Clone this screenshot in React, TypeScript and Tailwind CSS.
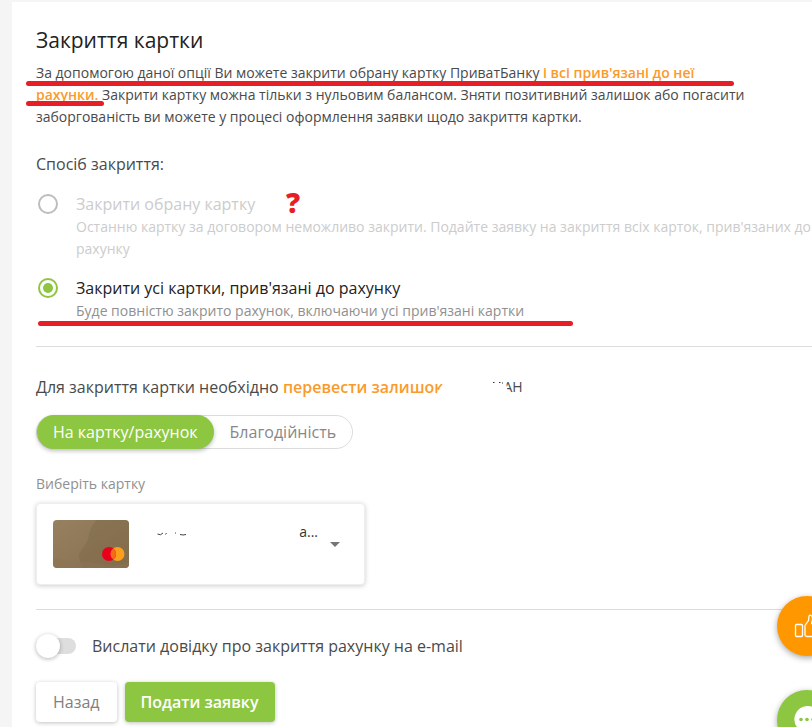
import { useState } from 'react'

const METHODS = [
  {
    id: 'single', title: 'Закрити обрану картку', disabled: true,
    hint: "Останню картку за договором неможливо закрити. Подайте заявку на закриття всіх карток, прив'язаних до рахунку",
  },
  {
    id: 'all', title: "Закрити усі картки, прив'язані до рахунку", disabled: false,
    hint: "Буде повністю закрито рахунок, включаючи усі прив'язані картки",
  },
]

function CardArt() {
  return (
    <svg viewBox="0 0 76 48" className="h-12 w-[76px] shrink-0 rounded" aria-hidden="true">
      <defs>
        <linearGradient id="gold" x1="0" y1="0" x2="1" y2="1">
          <stop offset="0" stopColor="#97805f" />
          <stop offset="1" stopColor="#86704f" />
        </linearGradient>
      </defs>
      <rect width="76" height="48" fill="url(#gold)" />
      <path d="M43 0c-3 5-6 8-7 15-1 8-6 13-10 19-1 5 2 9 4 14h46V0z" fill="#7d6849" opacity=".45" />
      <path d="M0 38c14 4 28 2 42 5s22 3 34-1v6H0z" fill="#8d7453" opacity=".5" />
      <circle cx="64.5" cy="34" r="7" fill="#f99f1b" />
      <circle cx="56" cy="34" r="7" fill="#eb001b" />
      <path d="M60.2 28.4a7 7 0 0 1 0 11.2 7 7 0 0 1 0-11.2z" fill="#f26a1b" />
    </svg>
  )
}

function Methods() {
  const [method, setMethod] = useState('all')
  return (
    <fieldset className="relative mt-6 -mr-5">
      <legend className="text-base leading-6">Спосіб закриття:</legend>
      {METHODS.map((m) => (
        <div key={m.id} className="mt-4 flex gap-[18px] pl-0.5">
          <input
            type="radio" name="method" id={m.id} disabled={m.disabled}
            checked={method === m.id} onChange={() => setMethod(m.id)}
            className="mt-0.5 grid size-5 shrink-0 appearance-none place-items-center rounded-full border-2 border-[#bdbdbd] before:size-2.5 before:rounded-full checked:border-[#8dc641] checked:before:bg-[#8dc641]"
          />
          <label htmlFor={m.id} className="block">
            <span className={`block text-base leading-6 ${m.disabled ? 'text-[#cccccc]' : 'text-[#222222]'}`}>{m.title}</span>
            <span className={`block text-sm leading-[22px] ${m.disabled ? 'text-[#cccccc]' : 'text-[#909090]'}`}>{m.hint}</span>
          </label>
        </div>
      ))}
      <span className="absolute top-3 left-[250px] text-[28px] leading-7 font-extrabold text-[#e71e25]">?</span>
      <span className="absolute -bottom-1 left-0.5 h-[5px] w-[535px] rounded-full bg-[#e71e25]" />
    </fieldset>
  )
}

function Destination() {
  const [target, setTarget] = useState('card')
  const tab = 'rounded-full px-4 text-base'
  const active = 'bg-[#8dc641] text-white shadow-[0_2px_4px_rgba(0,0,0,0.25)]'
  return (
    <>
      <p className="flex text-base leading-6">
        <span className="whitespace-pre">Для закриття картки необхідно </span>
        <span className="font-semibold text-[#fb9a2c] [clip-path:polygon(0_0,100%_0,100%_35%,96%_75%,90%_100%,0_100%)]">перевести залишок</span>
        <svg viewBox="0 0 16 24" className="ml-11 h-6 w-4" aria-hidden="true">
          <path d="M6 7.5h1.500M12 7.5h1.500M15 8h1" stroke="#333" strokeWidth="1" />
        </svg>
        <span className="text-sm leading-6 font-medium [clip-path:polygon(1px_0,100%_0,100%_100%,6px_100%)]">АН</span>
      </p>
      <div className="mt-4 inline-flex h-[34px] rounded-full border border-[#dcdcdc]">
        <button type="button" onClick={() => setTarget('card')} className={`-my-px ${tab} ${target === 'card' ? active : 'text-[#888888]'}`}>На картку/рахунок</button>
        <button type="button" onClick={() => setTarget('charity')} className={`-my-px ${tab} ${target === 'charity' ? active : 'text-[#888888]'}`}>Благодійність</button>
      </div>
      <label htmlFor="card" className="mt-6 block text-sm leading-[22px] text-[#909090]">Виберіть картку</label>
      <div className="mt-2 flex w-[329px] items-center rounded border border-[#eeeeee] bg-white p-4 shadow-[0_1px_5px_rgba(0,0,0,0.2)]">
        <CardArt />
        <svg viewBox="0 0 40 48" className="ml-6 h-12 w-10 shrink-0" aria-hidden="true">
          <path d="M4.5 14q3 2 5.500-1M12.500 14.500l1-1.500M22 13h1M27 14.500q3 1 6 0" fill="none" stroke="#444" strokeWidth="1" />
        </svg>
        <select id="card" className="h-12 min-w-0 flex-1 appearance-none bg-transparent pb-6 text-sm text-[#333333] [text-align-last:right]">
          <option>а...</option>
        </select>
        <svg viewBox="0 0 10 5" className="mr-2 ml-3 h-[5px] w-2.5 shrink-0" aria-hidden="true"><path d="M0 0h10L5 5z" fill="#757575" /></svg>
      </div>
    </>
  )
}

function FloatingActions() {
  return (
    <div className="fixed -right-[25px] -bottom-[23px] flex flex-col gap-[34px]">
      <button type="button" aria-label="Оцінити" className="grid size-[60px] place-items-center rounded-full bg-[#ff9800] shadow-[0_2px_6px_rgba(0,0,0,0.35)]">
        <svg viewBox="0 0 26 26" className="size-[26px]" fill="none" stroke="#fff" strokeWidth="1.300" strokeLinejoin="round">
          <rect x="1.500" y="11.500" width="7" height="12" rx="1" />
          <path d="M11 22V12.500l3.500-5 .5-4.500c.2-1.300 3.600-1 3.600 2.200 0 2-1 4.300-1 5.300H23c2 0 2 2 1.500 4l-2 7c-.4 1.200-1 2-2.500 2h-7c-1 0-2-.5-2-1.500z" />
        </svg>
      </button>
      <button type="button" aria-label="Чат" className="grid size-[60px] place-items-center rounded-full bg-[#8dc641] shadow-[0_2px_6px_rgba(0,0,0,0.35)]">
        <svg viewBox="0 0 28 28" className="size-7">
          <path d="M14 0a14 13 0 1 1-5 25l-6 3 1.500-6A13.500 13.500 0 0 1 14 0z" fill="#fff" />
          <g fill="#8dc641"><circle cx="8" cy="13.500" r="1.800" /><circle cx="14" cy="13.500" r="1.800" /><circle cx="20" cy="13.500" r="1.800" /></g>
        </svg>
      </button>
    </div>
  )
}

export default function App() {
  return (
    <div className="min-h-screen overflow-hidden bg-[#f5f5f5] pt-0.5 pl-3 font-['Open_Sans','Noto_Sans',sans-serif] text-[#4a4a4a]">
      <main className="min-h-[calc(100vh-2px)] bg-white pt-6 pl-6">
        <h1 className="text-[21px] leading-7 text-[#222222]">Закриття картки</h1>
        <div className="relative mt-2">
          <p className="max-w-[720px] text-sm leading-[22px]">
            За допомогою даної опції Ви можете закрити обрану картку ПриватБанку <strong className="font-semibold text-[#fb9a2c]">і всі прив'язані до неї рахунки.</strong> Закрити картку можна тільки з нульовим балансом. Зняти позитивний залишок або погасити заборгованість ви можете у процесі оформлення заявки щодо закриття картки.
          </p>
          <span className="absolute top-[19px] -left-2.5 h-[5px] w-[708px] rounded-full bg-[#e71e25]" />
          <span className="absolute top-[39px] -left-2.5 h-[5px] w-[78px] rounded-full bg-[#e71e25]" />
        </div>
        <Methods />
        <section className="mt-6 border-t border-[#dcdcdc] pt-7"><Destination /></section>
        <section className="mt-6 border-t border-[#dcdcdc] pt-6 pb-1">
          <label className="flex items-center gap-4 text-base leading-6">
            <input
              type="checkbox"
              className="flex h-4 w-10 appearance-none items-center rounded-full bg-[#dedede] before:size-6 before:shrink-0 before:rounded-full before:bg-white before:shadow-[0_1px_4px_rgba(0,0,0,0.3)] checked:bg-[#8dc641] checked:before:ml-4"
            />
            Вислати довідку про закриття рахунку на e-mail
          </label>
          <div className="mt-6 flex gap-2">
            <button type="button" className="h-10 rounded-sm bg-white px-[17px] text-base font-medium text-[#808080] shadow-[0_1px_4px_rgba(0,0,0,0.25)]">Назад</button>
            <button type="submit" className="h-10 rounded-sm bg-[#8dc641] px-4 text-base font-semibold text-white shadow-[0_1px_4px_rgba(0,0,0,0.25)]">Подати заявку</button>
          </div>
        </section>
      </main>
      <FloatingActions />
    </div>
  )
}
